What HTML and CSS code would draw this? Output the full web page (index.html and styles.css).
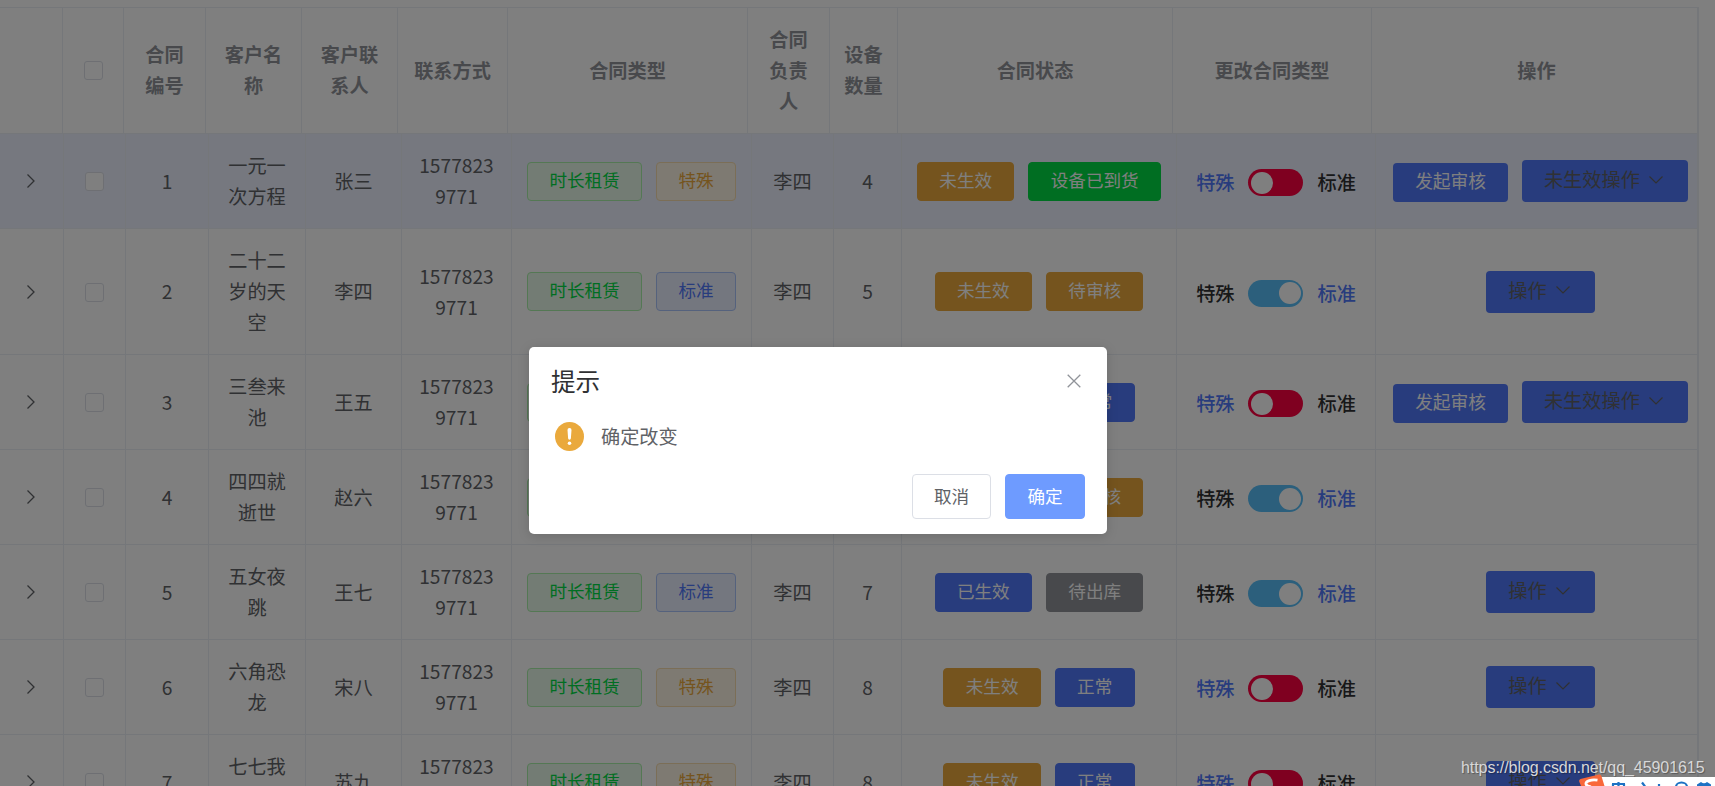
FILE: index.html
```html
<!DOCTYPE html>
<html lang="zh-CN">
<head>
<meta charset="utf-8">
<title>合同管理</title>
<link rel="stylesheet" href="styles.css">
</head>
<body>
<svg width="0" height="0" class="defs">
  <symbol id="right" viewBox="0 0 10 16"><path d="M1.5 1.5 8 8 1.5 14.5" fill="none" stroke="currentColor" stroke-width="1.3"/></symbol>
  <symbol id="down" viewBox="0 0 16 10"><path d="M1.5 1.5 8 8 14.5 1.5" fill="none" stroke="currentColor" stroke-width="1.2"/></symbol>
</svg>
<main class="table">
  <div class="row head">
    <div class="cell"></div><div class="cell"><i class="check"></i></div><div class="cell">合同<br>编号</div><div class="cell">客户名<br>称</div><div class="cell">客户联<br>系人</div><div class="cell">联系方式</div><div class="cell">合同类型</div><div class="cell">合同<br>负责<br>人</div><div class="cell">设备<br>数量</div><div class="cell">合同状态</div><div class="cell">更改合同类型</div><div class="cell">操作</div>
  </div>
  <div class="row current">
    <div class="cell"><svg class="arrow"><use href="#right"/></svg></div><div class="cell"><i class="check"></i></div><div class="cell">1</div><div class="cell">一元一<br>次方程</div><div class="cell">张三</div><div class="cell">1577823<br>9771</div>
    <div class="cell tags"><span class="tag green">时长租赁</span><span class="tag amber">特殊</span></div><div class="cell">李四</div><div class="cell">4</div>
    <div class="cell tags"><span class="tag warning">未生效</span><span class="tag success">设备已到货</span></div>
    <div class="cell switch"><b class="active">特殊</b><i class="track"></i><b>标准</b></div>
    <div class="cell tags ops"><button class="btn">发起审核</button><button class="btn drop">未生效操作<svg><use href="#down"/></svg></button></div>
  </div>
  <div class="row tall">
    <div class="cell"><svg class="arrow"><use href="#right"/></svg></div><div class="cell"><i class="check"></i></div><div class="cell">2</div><div class="cell">二十二<br>岁的天<br>空</div><div class="cell">李四</div><div class="cell">1577823<br>9771</div>
    <div class="cell tags"><span class="tag green">时长租赁</span><span class="tag blue">标准</span></div><div class="cell">李四</div><div class="cell">5</div>
    <div class="cell tags"><span class="tag warning">未生效</span><span class="tag warning">待审核</span></div>
    <div class="cell switch"><b>特殊</b><i class="track on"></i><b class="active">标准</b></div>
    <div class="cell tags ops"><button class="btn drop">操作<svg><use href="#down"/></svg></button></div>
  </div>
  <div class="row">
    <div class="cell"><svg class="arrow"><use href="#right"/></svg></div><div class="cell"><i class="check"></i></div><div class="cell">3</div><div class="cell">三叁来<br>池</div><div class="cell">王五</div><div class="cell">1577823<br>9771</div>
    <div class="cell tags"><span class="tag green">时长租赁</span><span class="tag amber">特殊</span></div><div class="cell"></div><div class="cell"></div>
    <div class="cell tags"><span class="tag warning">未生效</span><span class="tag primary">正常</span></div>
    <div class="cell switch"><b class="active">特殊</b><i class="track"></i><b>标准</b></div>
    <div class="cell tags ops"><button class="btn">发起审核</button><button class="btn drop">未生效操作<svg><use href="#down"/></svg></button></div>
  </div>
  <div class="row">
    <div class="cell"><svg class="arrow"><use href="#right"/></svg></div><div class="cell"><i class="check"></i></div><div class="cell">4</div><div class="cell">四四就<br>逝世</div><div class="cell">赵六</div><div class="cell">1577823<br>9771</div>
    <div class="cell tags"><span class="tag green">时长租赁</span><span class="tag blue">标准</span></div><div class="cell"></div><div class="cell"></div>
    <div class="cell tags"><span class="tag warning">未生效</span><span class="tag warning">待审核</span></div>
    <div class="cell switch"><b>特殊</b><i class="track on"></i><b class="active">标准</b></div>
    <div class="cell"></div>
  </div>
  <div class="row">
    <div class="cell"><svg class="arrow"><use href="#right"/></svg></div><div class="cell"><i class="check"></i></div><div class="cell">5</div><div class="cell">五女夜<br>跳</div><div class="cell">王七</div><div class="cell">1577823<br>9771</div>
    <div class="cell tags"><span class="tag green">时长租赁</span><span class="tag blue">标准</span></div><div class="cell">李四</div><div class="cell">7</div>
    <div class="cell tags"><span class="tag primary">已生效</span><span class="tag info">待出库</span></div>
    <div class="cell switch"><b>特殊</b><i class="track on"></i><b class="active">标准</b></div>
    <div class="cell tags ops"><button class="btn drop">操作<svg><use href="#down"/></svg></button></div>
  </div>
  <div class="row">
    <div class="cell"><svg class="arrow"><use href="#right"/></svg></div><div class="cell"><i class="check"></i></div><div class="cell">6</div><div class="cell">六角恐<br>龙</div><div class="cell">宋八</div><div class="cell">1577823<br>9771</div>
    <div class="cell tags"><span class="tag green">时长租赁</span><span class="tag amber">特殊</span></div><div class="cell">李四</div><div class="cell">8</div>
    <div class="cell tags"><span class="tag warning">未生效</span><span class="tag primary">正常</span></div>
    <div class="cell switch"><b class="active">特殊</b><i class="track"></i><b>标准</b></div>
    <div class="cell tags ops"><button class="btn drop">操作<svg><use href="#down"/></svg></button></div>
  </div>
  <div class="row">
    <div class="cell"><svg class="arrow"><use href="#right"/></svg></div><div class="cell"><i class="check"></i></div><div class="cell">7</div><div class="cell">七七我<br>&nbsp;</div><div class="cell">苏九</div><div class="cell">1577823<br>&nbsp;</div>
    <div class="cell tags"><span class="tag green">时长租赁</span><span class="tag amber">特殊</span></div><div class="cell">李四</div><div class="cell">8</div>
    <div class="cell tags"><span class="tag warning">未生效</span><span class="tag primary">正常</span></div>
    <div class="cell switch"><b class="active">特殊</b><i class="track"></i><b>标准</b></div>
    <div class="cell tags ops"><button class="btn drop">操作<svg><use href="#down"/></svg></button></div>
  </div>
</main>
<div class="mask"></div>
<section class="modal">
  <header class="modal-head"><span>提示</span><svg class="close" viewBox="0 0 14 14"><path d="M.7.7 13.3 13.3M13.3.7.7 13.3" stroke="currentColor" stroke-width="1.3"/></svg></header>
  <div class="modal-body"><svg class="warn" viewBox="0 0 29 29"><circle cx="14.5" cy="14.5" r="14.5" fill="#eaa93c"/><path d="M14.5 6a2 2 0 0 1 2 2.1l-.6 8.2a1.4 1.4 0 0 1-2.8 0l-.6-8.2a2 2 0 0 1 2-2.1z" fill="#fff"/><circle cx="14.5" cy="21.2" r="1.8" fill="#fff"/></svg><span>确定改变</span></div>
  <footer class="modal-foot"><button class="cancel">取消</button><button class="ok">确定</button></footer>
</section>
<div class="watermark">https://blog.csdn.net/qq_45901615</div>
<svg class="ime" viewBox="0 0 138 13">
  <rect x="12" y="4" width="126" height="9" fill="#fff"/>
  <path d="M3.500 6 22 1.600a2 2 0 0 1 2.400 1.500L27.500 13H4L2.200 8.400A2 2 0 0 1 3.500 6z" fill="#f9683a"/>
  <path d="M20.500 7.200c-6-1-12 .8-11.500 3.800.3 1.500 2 2.500 5 3" fill="none" stroke="#fff" stroke-width="2.800"/>
  <path d="M35 11h13M41.500 9V13M36 11v2M47 11v2M65 9.500l3 4M82 11v2" stroke="#1d72c4" stroke-width="2.200" fill="none"/>
  <path d="M99 14a5.500 4.500 0 0 1 11 0" stroke="#1d72c4" stroke-width="2.200" fill="none"/>
  <path d="M120 11.500l4-2.500q3 2.500 6 0l4 2.500v2h-14z" fill="#1d72c4"/>
</svg>
</body>
</html>
```
FILE: styles.css
```css
* { box-sizing: border-box; }
html, body { margin: 0; height: 786px; overflow: hidden; background: #fff; }
body { position: relative; font: 19.2px/31px "Noto Sans CJK SC", sans-serif; color: #606266; }
button { font: inherit; }
.defs { position: absolute; }
.table { width: 1699px; height: 779px; overflow: hidden; margin-top: 7px; border-top: 1px solid #ebeef5; border-right: 2px solid #ebeef5; }
.row { display: grid; grid-template-columns: 64px 62px 83px 97px 96px 110px 240px 82px 68px 275px 199px 1fr; height: 95px; }
.head { grid-template-columns: 63px 61px 82px 96px 96px 110px 240px 82px 68px 275px 199px 1fr; height: 126px; font-weight: 700; color: #909399; }
.tall { height: 126px; }
.current { background: #ecf1ff; }
.cell { display: flex; align-items: center; justify-content: center; text-align: center; border-right: 1px solid #ebeef5; border-bottom: 1px solid #ebeef5; white-space: nowrap; }
.head .cell { padding-bottom: 1px; }
.cell:last-child { border-right: 0; }
.head .cell:last-child { padding-left: 4px; }
.arrow { width: 10px; height: 16px; margin-right: 1px; color: #606266; }
.check { width: 19px; height: 19px; margin-top: 1px; border: 1px solid #dcdfe6; border-radius: 3px; background: #fff; }
.tags { gap: 14px; }
.ops { padding-left: 8px; }
.tag { height: 39px; padding: 0 21.3px; border: 1px solid; border-radius: 4px; font-size: 17.6px; line-height: 33px; }
.green { color: #00dc44; border-color: #a8f0a8; background: #e6f8e8; }
.amber { color: #eaa93c; border-color: #f6dcae; background: #fdf4e4; }
.blue { color: #5078fa; border-color: #aac4fa; background: #e9effe; }
.warning, .success, .primary, .info { color: #fff; }
.warning { background: #eaa93c; border-color: #eaa93c; }
.success { background: #00dc44; border-color: #00dc44; }
.primary { background: #5078fa; border-color: #5078fa; }
.info { background: #909399; border-color: #909399; }
.switch { padding-top: 3px; }
.switch b { font-weight: 500; color: #303133; }
.switch .active { color: #5078fa; }
.track { width: 55px; height: 27px; margin: 0 15px 0 13px; padding: 0 3px; border-radius: 14px; background: #ff0040; display: flex; align-items: center; }
.track::before { content: ""; width: 22px; height: 22px; border-radius: 50%; background: #fff; }
.on { background: #58bff8; justify-content: flex-end; padding-right: 2px; }
.btn { height: 39px; margin-top: 2px; padding: 0 22px 3px; border: 0; border-radius: 4px; background: #5078fa; color: #fff; font-size: 17.7px; line-height: 35px; }
.drop { height: 42px; margin-top: 0; padding-right: 24px; font-size: 19.2px; color: #606266; display: flex; align-items: center; }
.drop svg { width: 16px; height: 10px; margin-left: 8px; }
.mask { position: absolute; inset: 0; background: rgba(0, 0, 0, .5); }
.modal { position: absolute; left: 529px; top: 347px; width: 578px; height: 187px; padding: 18px 22px 15px; border-radius: 5px; background: #fff; box-shadow: 0 2px 12px rgba(0, 0, 0, .15); display: flex; flex-direction: column; }
.modal-head { display: flex; justify-content: space-between; align-items: center; font-size: 24.6px; line-height: 31px; color: #303133; }
.close { width: 14px; height: 14px; margin-right: 4px; color: #909399; }
.modal-body { display: flex; align-items: center; gap: 17px; padding: 25px 0 0 4px; }
.warn { width: 29px; height: 29px; }
.modal-foot { display: flex; justify-content: flex-end; gap: 14px; margin-top: auto; }
.modal-foot button { width: 79px; height: 45px; padding: 0 0 3px; border: 1px solid #dcdfe6; border-radius: 4px; background: #fff; color: #606266; font-size: 17.6px; }
.modal-foot .ok { width: 80px; background: #6e9bff; border-color: #6e9bff; color: #fff; }
.watermark { position: absolute; left: 1461px; top: 758px; font: 16px/20px "Liberation Sans", sans-serif; letter-spacing: -.06px; color: #d8d8d8; text-shadow: 1px 1px 1px rgba(0, 0, 0, .3); white-space: nowrap; }
.ime { position: absolute; left: 1577px; top: 773px; width: 138px; height: 13px; overflow: hidden; }
```
